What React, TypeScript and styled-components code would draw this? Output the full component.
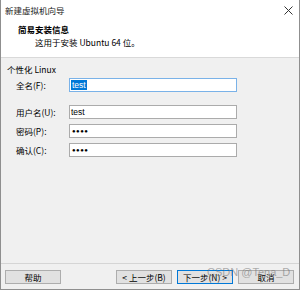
import React from "react";
import styled, { createGlobalStyle } from "styled-components";

const GlobalStyle = createGlobalStyle`
    html, body {
        margin: 0;
        padding: 0;
        background: #ffffff;
    }
    * {
        box-sizing: border-box;
    }
`;

const Window = styled.div`
    position: relative;
    width: 300px;
    height: 290px;
    display: flex;
    flex-direction: column;
    border: 1px solid #8f8f8f;
    border-top: none;
    font-family: "Noto Sans CJK SC", "Noto Sans", sans-serif;
    font-size: 8.5px;
    color: #000;
    overflow: hidden;
`;

const Header = styled.div`
    height: 58px;
    background: #ffffff;
    border-bottom: 1px solid #d9d9d9;
`;

const TitleBar = styled.div`
    height: 20px;
    display: flex;
    align-items: center;
    justify-content: space-between;
    padding: 0 6px 0 4px;
    color: #222;
`;

const HeaderTitle = styled.div`
    margin-top: 3px;
    padding-left: 17px;
    height: 12px;
    line-height: 12px;
    font-weight: bold;
`;

const HeaderSub = styled.div`
    margin-top: 1px;
    padding-left: 34px;
    height: 12px;
    line-height: 12px;
`;

const Body = styled.div`
    flex: 1;
    background: #f0f0f0;
    padding: 5px 0 0 6px;
    display: flex;
    flex-direction: column;
`;

const GroupLabel = styled.div`
    height: 12px;
    line-height: 12px;
    margin-bottom: 3px;
`;

const Row = styled.div<{ $gap: number }>`
    display: flex;
    align-items: center;
    height: 14px;
    margin-bottom: ${(p) => p.$gap}px;
`;

const Label = styled.div`
    width: 62px;
    padding-left: 9px;
`;

const Field = styled.div<{ $focus?: boolean }>`
    width: 168px;
    height: 14px;
    background: #fff;
    border: 1px solid ${(p) => (p.$focus ? "#7ab2e8" : "#ababab")};
    display: flex;
    align-items: center;
    padding-left: 1px;
    font-family: "Liberation Sans", Arial, sans-serif;
    font-size: 8.5px;
    color: #000;
`;

const Selected = styled.span`
    background: #0078d7;
    color: #fff;
    line-height: 10px;
    padding: 0 1px;
`;

const Dots = styled.span`
    font-size: 6px;
    letter-spacing: 0.5px;
    padding-left: 1px;
`;

const Footer = styled.div`
    height: 26px;
    background: #f0f0f0;
    border-top: 1px solid #d5d5d5;
    display: flex;
    justify-content: space-between;
    padding: 6px 5px 0 4px;
`;

const ButtonGroup = styled.div`
    display: flex;
    gap: 5px;
`;

const Button = styled.div<{ $default?: boolean }>`
    width: 56px;
    height: 14px;
    background: #e1e1e1;
    border: 1px solid ${(p) => (p.$default ? "#0078d7" : "#adadad")};
    display: flex;
    align-items: center;
    justify-content: center;
    line-height: 12px;
`;

const Watermark = styled.div`
    position: absolute;
    left: 206px;
    top: 266px;
    font-family: "Liberation Sans", Arial, sans-serif;
    font-size: 11px;
    color: rgba(110, 110, 110, 0.55);
    white-space: nowrap;
`;

const CloseIcon = () => (
    <svg width="9" height="9" viewBox="0 0 9 9">
        <path d="M0.5 0.5 L8.5 8.5 M8.5 0.5 L0.5 8.5" stroke="#333" strokeWidth="1" />
    </svg>
);

const App: React.FC = () => {
    return (
        <>
            <GlobalStyle />
            <Window>
                <Header>
                    <TitleBar>
                        <span>新建虚拟机向导</span>
                        <CloseIcon />
                    </TitleBar>
                    <HeaderTitle>简易安装信息</HeaderTitle>
                    <HeaderSub>这用于安装 Ubuntu 64 位。</HeaderSub>
                </Header>
                <Body>
                    <GroupLabel>个性化 Linux</GroupLabel>
                    <Row $gap={13}>
                        <Label>全名(F):</Label>
                        <Field $focus>
                            <Selected>test</Selected>
                        </Field>
                    </Row>
                    <Row $gap={5}>
                        <Label>用户名(U):</Label>
                        <Field>test</Field>
                    </Row>
                    <Row $gap={5}>
                        <Label>密码(P):</Label>
                        <Field>
                            <Dots>●●●●</Dots>
                        </Field>
                    </Row>
                    <Row $gap={0}>
                        <Label>确认(C):</Label>
                        <Field>
                            <Dots>●●●●</Dots>
                        </Field>
                    </Row>
                </Body>
                <Footer>
                    <Button>帮助</Button>
                    <ButtonGroup>
                        <Button>&lt; 上一步(B)</Button>
                        <Button $default>下一步(N) &gt;</Button>
                        <Button>取消</Button>
                    </ButtonGroup>
                </Footer>
                <Watermark>CSDN @Tena_D</Watermark>
            </Window>
        </>
    );
};

export default App;
